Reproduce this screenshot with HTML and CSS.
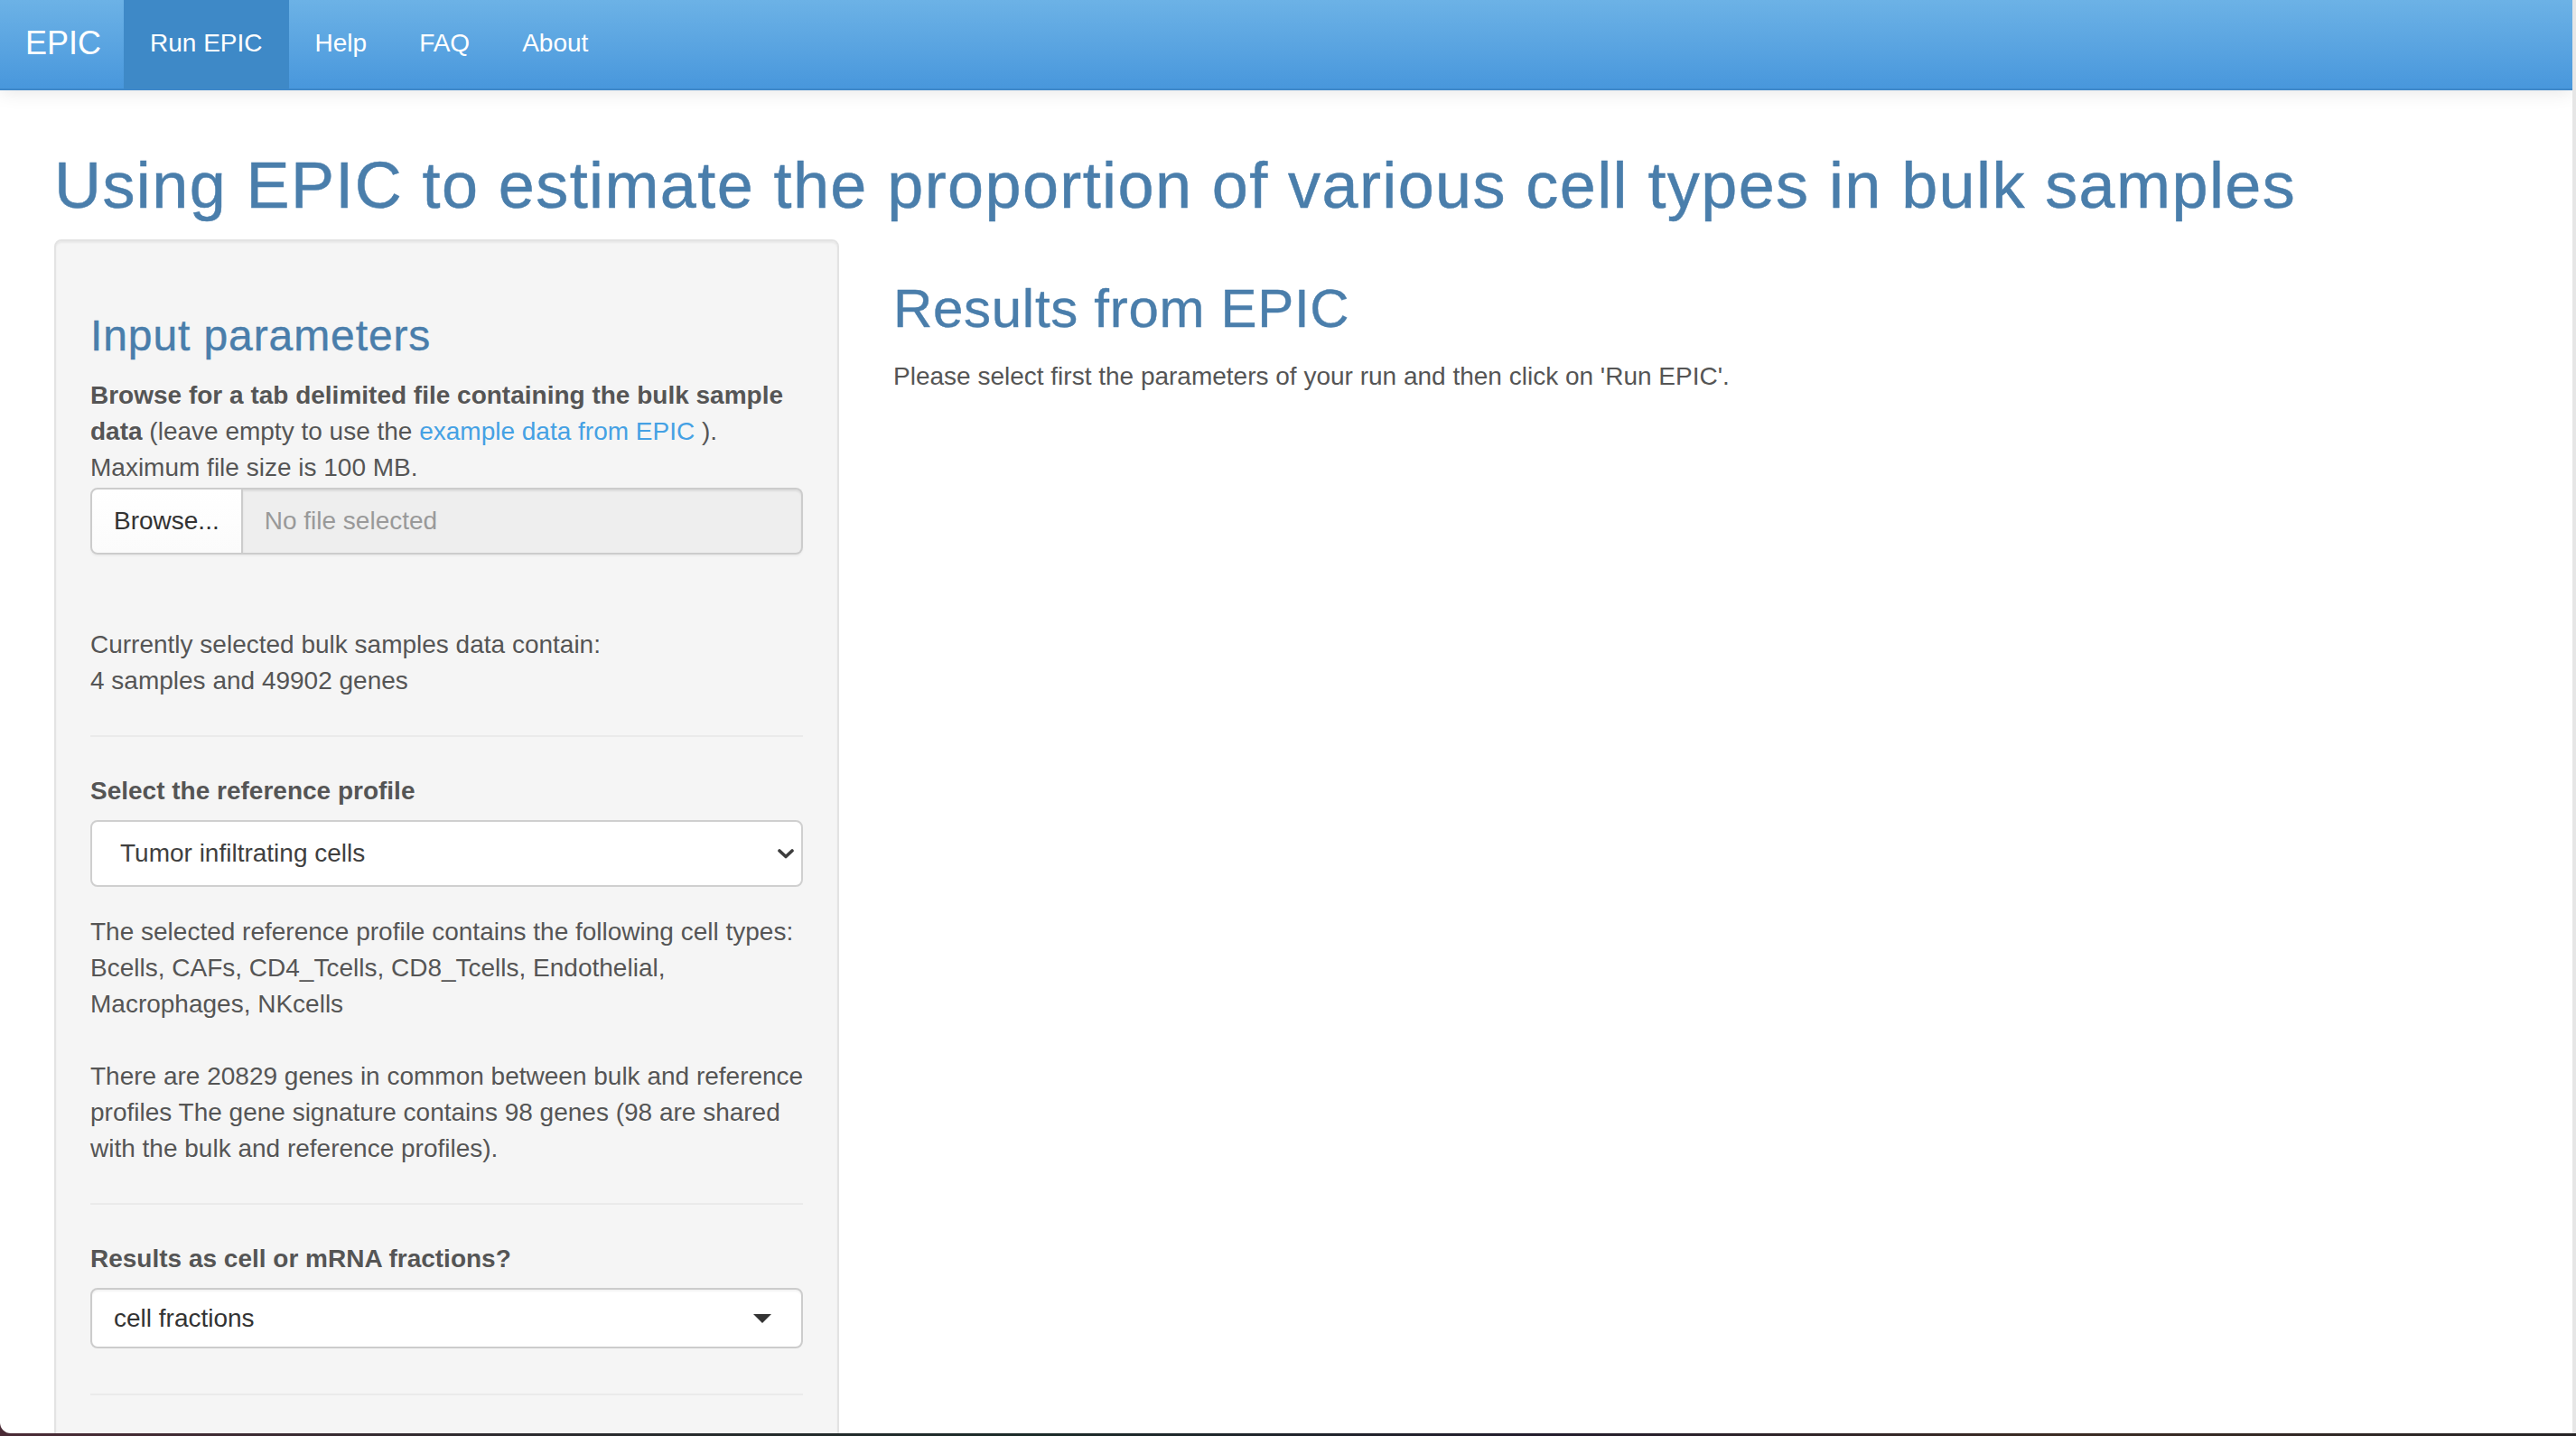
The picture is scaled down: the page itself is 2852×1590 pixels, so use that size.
FILE: index.html
```html
<!DOCTYPE html>
<html lang="en">
<head>
<meta charset="utf-8">
<title>EPIC</title>
<link rel="stylesheet" href="styles.css">
</head>
<body>
<div class="window">
  <div class="page">
    <nav class="navbar">
      <span class="brand">EPIC</span>
      <ul class="nav">
        <li class="active"><a>Run EPIC</a></li>
        <li><a>Help</a></li>
        <li><a>FAQ</a></li>
        <li><a>About</a></li>
      </ul>
    </nav>
    <div class="container">
      <h1 class="title">Using EPIC to estimate the proportion of various cell types in bulk samples</h1>
      <div class="row">
        <div class="col-side">
          <div class="well">
            <h3 class="well-title">Input parameters</h3>
            <div class="form-group file-group">
              <label class="control-label file-label"><b>Browse for a tab delimited file containing the bulk sample</b> <b>data</b> <span class="normal">(leave empty to use the <a class="link">example data from EPIC</a> ).</span><br><span class="normal">Maximum file size is 100 MB.</span></label>
              <div class="input-group">
                <span class="btn-browse">Browse...</span>
                <span class="file-name">No file selected</span>
              </div>
            </div>
            <div class="txt">Currently selected bulk samples data contain:<br>4 samples and 49902 genes</div>
            <hr class="sep">
            <div class="form-group">
              <label class="control-label">Select the reference profile</label>
              <div class="select-box">
                <span class="select-text">Tumor infiltrating cells</span>
                <svg class="chevron" width="18" height="11" viewBox="0 0 18 11"><polyline points="2,2 9,8.5 16,2" fill="none" stroke="#3d3d3d" stroke-width="3.6" stroke-linecap="round" stroke-linejoin="round"/></svg>
              </div>
            </div>
            <div class="txt first-txt">The selected reference profile contains the following cell types: Bcells, CAFs, CD4_Tcells, CD8_Tcells, Endothelial, Macrophages, NKcells</div>
            <div class="txt gap">There are 20829 genes in common between bulk and reference profiles The gene signature contains 98 genes (98 are shared with the bulk and reference profiles).</div>
            <hr class="sep">
            <div class="form-group last-group">
              <label class="control-label">Results as cell or mRNA fractions?</label>
              <div class="selectize-box">
                <span class="selectize-text">cell fractions</span>
                <span class="caret"></span>
              </div>
            </div>
            <hr class="sep sep-last">
          </div>
        </div>
        <div class="col-main">
          <h2 class="results-title">Results from EPIC</h2>
          <p class="results-text">Please select first the parameters of your run and then click on 'Run EPIC'.</p>
        </div>
      </div>
    </div>
  </div>
  <div class="scroll-strip"></div>
</div>
</body>
</html>
```

FILE: styles.css
```css
html {
  background: linear-gradient(90deg, #4a2a35 0%, #2c2a2e 20%, #1b2a28 40%, #221c2c 60%, #3a2a22 80%, #252325 100%);
}
body {
  margin: 0;
  height: 1590px;
  overflow: hidden;
  font-family: "Liberation Sans", Arial, Helvetica, sans-serif;
  font-size: 28px;
  line-height: 40px;
  color: #555555;
}
.window {
  display: flex;
  height: 1587px;
  overflow: hidden;
  background: #ffffff;
  border-bottom-left-radius: 12px;
}
.page {
  flex: 0 0 2848px;
  overflow: hidden;
}
.scroll-strip {
  flex: 0 0 4px;
  background: #e6e6e6;
}

/* navbar */
.navbar {
  display: flex;
  height: 100px;
  box-sizing: border-box;
  background: linear-gradient(#6cb2e6, #57a2e0 60%, #4897dc);
  border-bottom: 2px solid #3f88c9;
  box-shadow: 0 2px 20px rgba(0, 0, 0, 0.1);
  position: relative;
}
.brand {
  padding: 0 25px 0 28px;
  font-size: 36px;
  line-height: 96px;
  color: #ffffff;
}
.nav {
  display: flex;
  margin: 0;
  padding: 0;
  list-style: none;
}
.nav li a {
  display: block;
  padding: 0 29px;
  line-height: 96px;
  height: 98px;
  color: #ffffff;
  font-size: 28px;
}
.nav li.active a {
  background: #3e89c7;
}

/* content */
.container {
  padding: 0 60px;
}
.title {
  margin: 66px 0 20px;
  font-size: 72px;
  line-height: 79px;
  font-weight: 500;
  letter-spacing: 1.4px;
  color: #4a7eab;
  -webkit-text-stroke: 0.5px #4a7eab;
}
.row {
  display: grid;
  grid-template-columns: 869px 1fr;
  column-gap: 60px;
  align-items: start;
}
.well {
  background: #f5f5f5;
  border: 2px solid #e3e3e3;
  border-radius: 8px;
  padding: 38px;
  box-shadow: inset 0 2px 2px rgba(0, 0, 0, 0.05);
}
.well-title {
  margin: 40px 0 20px;
  font-size: 48px;
  line-height: 53px;
  font-weight: 500;
  letter-spacing: 0.9px;
  color: #4a7eab;
  -webkit-text-stroke: 0.4px #4a7eab;
}
.form-group {
  margin-bottom: 30px;
}
.file-group {
  margin-bottom: 80px;
}
.last-group {
  margin-bottom: 0;
}
.control-label {
  display: inline-block;
  max-width: 100%;
  margin-bottom: 12px;
  font-weight: bold;
}
.file-label {
  margin-bottom: 2px;
}
.normal {
  font-weight: normal;
}
.link {
  color: #45a1e4;
  text-decoration: none;
}
.input-group {
  display: flex;
  height: 74px;
  box-shadow: 0 2px 2px rgba(0, 0, 0, 0.04);
  border-radius: 8px;
}
.btn-browse {
  box-sizing: border-box;
  height: 74px;
  padding: 0 24px;
  line-height: 70px;
  border: 2px solid #cccccc;
  border-radius: 8px 0 0 8px;
  background: linear-gradient(#ffffff, #fbfbfb);
  color: #333333;
}
.file-name {
  flex: 1;
  box-sizing: border-box;
  height: 74px;
  padding: 0 24px;
  line-height: 70px;
  border: 2px solid #cccccc;
  border-left: 0;
  border-radius: 0 8px 8px 0;
  background: #eeeeee;
  color: #999999;
  box-shadow: inset 0 2px 2px rgba(0, 0, 0, 0.075);
}
.txt {
  margin-right: -14px;
}
.first-txt {
  margin-top: 3px;
}
.gap {
  margin-top: 40px;
}
.sep {
  margin: 40px 0;
  border: 0;
  border-top: 2px solid #eaeaea;
  height: 0;
}
.sep-last {
  margin-top: 50px;
}
.select-box {
  display: flex;
  align-items: center;
  justify-content: space-between;
  box-sizing: border-box;
  height: 74px;
  padding: 0 8px 0 31px;
  border: 2px solid #cfcfcf;
  border-radius: 8px;
  background: #ffffff;
  color: #3f3f3f;
}
.chevron {
  display: block;
}
.selectize-box {
  display: flex;
  align-items: center;
  justify-content: space-between;
  box-sizing: border-box;
  height: 67px;
  padding: 0 33px 0 24px;
  border: 2px solid #cccccc;
  border-radius: 8px;
  background: #ffffff;
  color: #333333;
  box-shadow: inset 0 2px 2px rgba(0, 0, 0, 0.05);
}
.caret {
  width: 0;
  height: 0;
  border-style: solid;
  border-width: 10px 10px 0 10px;
  border-color: #333333 transparent transparent transparent;
}
.results-title {
  margin: 44px 0 22px;
  font-size: 60px;
  line-height: 66px;
  font-weight: 500;
  letter-spacing: 0.7px;
  color: #4a7eab;
  -webkit-text-stroke: 0.4px #4a7eab;
}
.results-text {
  margin: 0 0 20px;
}
```
